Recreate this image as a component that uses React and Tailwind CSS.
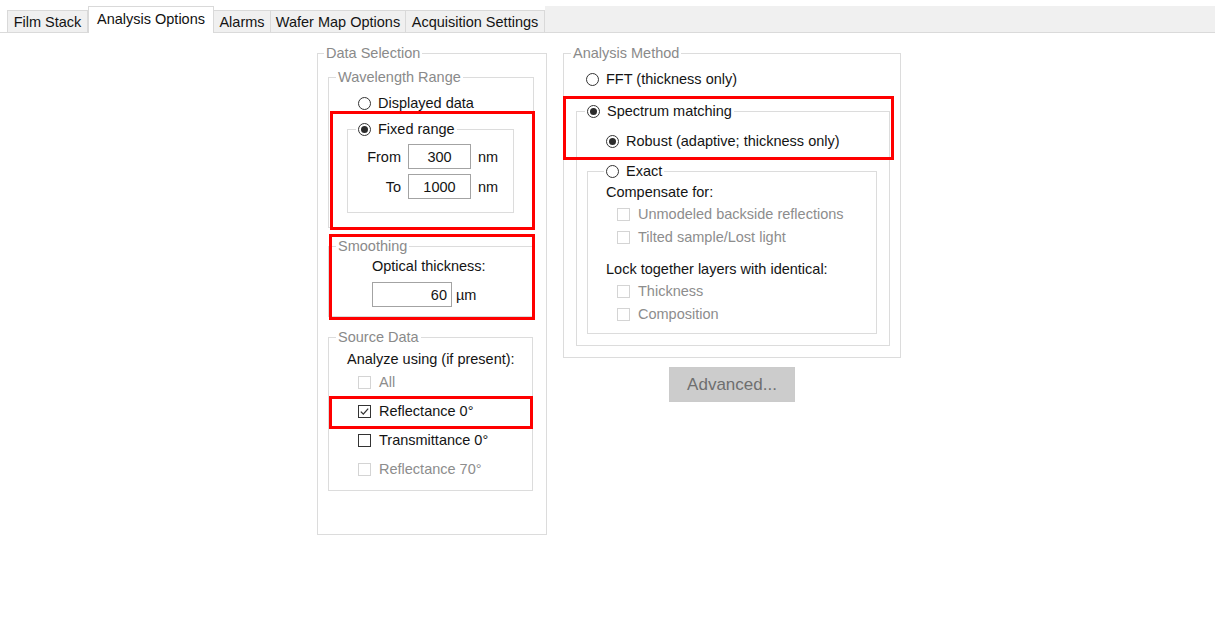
import React from 'react';

const tabs = [
  { label: 'Film Stack', w: 'w-[81px]' },
  { label: 'Analysis Options', w: 'w-[126px]', active: true },
  { label: 'Alarms', w: 'w-[58px]' },
  { label: 'Wafer Map Options', w: 'w-[136px]' },
  { label: 'Acquisition Settings', w: 'w-[140px]' },
];

function Radio({ checked }) {
  return (
    <span className="flex h-[13px] w-[13px] shrink-0 items-center justify-center rounded-full border border-[#333333] bg-white">
      {checked && <span className="h-[7px] w-[7px] rounded-full bg-[#2b2b2b]" />}
    </span>
  );
}

function Check({ checked, disabled }) {
  return (
    <span
      className={`flex h-[13px] w-[13px] shrink-0 items-center justify-center border bg-white ${
        disabled ? 'border-[#d4d4d4]' : 'border-[#333333]'
      }`}
    >
      {checked && (
        <svg viewBox="0 0 11 11" className="h-[11px] w-[11px]">
          <path d="M1.8 5.6 L4.3 8.1 L9.2 2.6" fill="none" stroke="#333333" strokeWidth="1.3" />
        </svg>
      )}
    </span>
  );
}

// Windows-style group box: thin frame with the caption sitting on the top edge
function GroupBox({ title, titleClass, className, children }) {
  return (
    <div className={`relative border border-[#dcdcdc] ${className}`}>
      <div className={`absolute -top-[9px] flex h-[16px] items-center bg-white px-[2px] leading-[16px] ${titleClass}`}>
        {title}
      </div>
      {children}
    </div>
  );
}

function RadioRow({ checked, label, className = '' }) {
  return (
    <div className={`flex h-[20px] items-center ${className}`}>
      <Radio checked={checked} />
      <span className="ml-[7px] text-[#141414]">{label}</span>
    </div>
  );
}

function CheckRow({ checked, disabled, label, className = '' }) {
  return (
    <div className={`flex h-[20px] items-center ${className}`}>
      <Check checked={checked} disabled={disabled} />
      <span className={`ml-[8px] ${disabled ? 'text-[#8d8d8d]' : 'text-[#141414]'}`}>{label}</span>
    </div>
  );
}

function Field({ value, className }) {
  return (
    <div className={`flex h-[25px] items-center border border-[#a3a3a3] bg-white px-[4px] text-[#141414] ${className}`}>
      {value}
    </div>
  );
}

function Highlight({ className }) {
  return <div className={`pointer-events-none absolute border-[3px] border-[#ff0000] ${className}`} />;
}

export default function App() {
  return (
    <div className="h-[619px] w-[1215px] bg-white font-['Liberation_Sans',Arial,sans-serif] text-[14.5px] leading-[16px]">
      {/* tab strip */}
      <div className="flex h-[33px] items-end border-b border-[#dadada] pl-[7px]">
        {tabs.map((t) =>
          t.active ? (
            <div
              key={t.label}
              className={`-mb-px flex h-[27px] items-center justify-center border-x border-t border-[#d9d9d9] bg-white pb-[3px] text-[#111111] ${t.w}`}
            >
              {t.label}
            </div>
          ) : (
            <div
              key={t.label}
              className={`-ml-px flex h-[22px] items-center justify-center border border-b-0 border-[#d9d9d9] bg-[#f0f0f0] text-[#141414] first:ml-0 ${t.w}`}
            >
              {t.label}
            </div>
          )
        )}
        <div className="h-[26px] flex-1 bg-[#f0f0f0]" />
      </div>

      <div className="flex pl-[317px]">
        {/* left column */}
        <GroupBox
          title={<span className="text-[#8a8a8a]">Data Selection</span>}
          titleClass="left-[6px]"
          className="mt-[20px] h-[482px] w-[230px]"
        >
          <GroupBox
            title={<span className="text-[#8a8a8a]">Wavelength Range</span>}
            titleClass="left-[7px]"
            className="ml-[10px] mt-[23px] h-[151px] w-[206px]"
          >
            <RadioRow label="Displayed data" className="mt-[15px] pl-[29px]" />
            <GroupBox
              title={
                <span className="flex items-center">
                  <Radio checked />
                  <span className="ml-[7px] text-[#141414]">Fixed range</span>
                </span>
              }
              titleClass="left-[8px]"
              className="ml-[18px] mt-[16px] h-[84px] w-[167px]"
            >
              <div className="mt-[14px] flex items-center">
                <span className="w-[53px] text-right text-[#141414]">From</span>
                <Field value="300" className="ml-[7px] w-[63px] justify-center" />
                <span className="ml-[7px] text-[#141414]">nm</span>
              </div>
              <div className="mt-[5px] flex items-center">
                <span className="w-[53px] text-right text-[#141414]">To</span>
                <Field value="1000" className="ml-[7px] w-[63px] justify-center" />
                <span className="ml-[7px] text-[#141414]">nm</span>
              </div>
            </GroupBox>
          </GroupBox>

          <GroupBox
            title={<span className="text-[#8a8a8a]">Smoothing</span>}
            titleClass="left-[7px]"
            className="ml-[10px] mt-[18px] h-[71px] w-[206px]"
          >
            <div className="mt-[11px] h-[16px] pl-[43px] text-[#141414]">Optical thickness:</div>
            <div className="mt-[8px] flex items-center pl-[43px]">
              <Field value="60" className="w-[80px] justify-end" />
              <span className="ml-[4px] text-[#141414]">µm</span>
            </div>
          </GroupBox>

          <GroupBox
            title={<span className="text-[#8a8a8a]">Source Data</span>}
            titleClass="left-[7px]"
            className="ml-[10px] mt-[20px] h-[154px] w-[205px]"
          >
            <div className="mt-[13px] h-[16px] pl-[18px] text-[#141414]">Analyze using (if present):</div>
            <CheckRow label="All" disabled className="mt-[5px] pl-[29px]" />
            <CheckRow label="Reflectance 0°" checked className="mt-[9px] pl-[29px]" />
            <CheckRow label="Transmittance 0°" className="mt-[9px] pl-[29px]" />
            <CheckRow label="Reflectance 70°" disabled className="mt-[9px] pl-[29px]" />
          </GroupBox>

          <Highlight className="left-[12px] top-[57px] h-[119px] w-[205px]" />
          <Highlight className="left-[11px] top-[180px] h-[86px] w-[206px]" />
          <Highlight className="left-[11px] top-[342px] h-[33px] w-[204px]" />
        </GroupBox>

        {/* right column */}
        <div className="ml-[16px] flex flex-col items-center">
          <GroupBox
            title={<span className="text-[#8a8a8a]">Analysis Method</span>}
            titleClass="left-[7px]"
            className="mt-[20px] h-[305px] w-[338px]"
          >
            <RadioRow label="FFT (thickness only)" className="mt-[15px] pl-[22px]" />
            <GroupBox
              title={
                <span className="flex items-center">
                  <Radio checked />
                  <span className="ml-[7px] text-[#141414]">Spectrum matching</span>
                </span>
              }
              titleClass="left-[8px]"
              className="ml-[12px] mt-[22px] h-[235px] w-[314px]"
            >
              <RadioRow checked label="Robust (adaptive; thickness only)" className="mt-[19px] pl-[29px]" />
              <GroupBox
                title={
                  <span className="flex items-center">
                    <Radio />
                    <span className="ml-[7px] text-[#141414]">Exact</span>
                  </span>
                }
                titleClass="left-[16px]"
                className="ml-[10px] mt-[20px] h-[163px] w-[290px]"
              >
                <div className="mt-[12px] h-[16px] pl-[18px] text-[#141414]">Compensate for:</div>
                <CheckRow label="Unmodeled backside reflections" disabled className="mt-[4px] pl-[29px]" />
                <CheckRow label="Tilted sample/Lost light" disabled className="mt-[3px] pl-[29px]" />
                <div className="mt-[14px] h-[16px] pl-[18px] text-[#141414]">Lock together layers with identical:</div>
                <CheckRow label="Thickness" disabled className="mt-[4px] pl-[29px]" />
                <CheckRow label="Composition" disabled className="mt-[3px] pl-[29px]" />
              </GroupBox>
            </GroupBox>
            <Highlight className="-left-[1px] top-[42px] h-[64px] w-[331px]" />
          </GroupBox>

          <button className="mt-[9px] flex h-[35px] w-[126px] items-center justify-center border border-[#cbcbcb] bg-[#cccccc] text-[17px] text-[#6f6f6f]">
            Advanced...
          </button>
        </div>
      </div>
    </div>
  );
}
